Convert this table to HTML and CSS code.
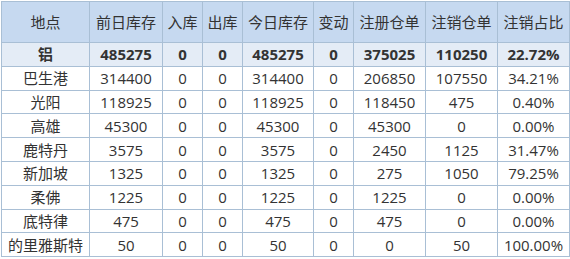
FILE: index.html
```html
<!DOCTYPE html>
<html lang="zh">
<head>
  <meta charset="UTF-8" />
  <title>库存</title>
  <link rel="stylesheet" href="styles.css">
</head>
<body>
  <table class="stock">
    <colgroup>
      <col style="width:88px"><col style="width:73px"><col style="width:40px"><col style="width:40px"><col style="width:71px"><col style="width:40px"><col style="width:72px"><col style="width:72px"><col style="width:72px">
    </colgroup>
    <thead>
      <tr><th>地点</th><th>前日库存</th><th>入库</th><th>出库</th><th>今日库存</th><th>变动</th><th>注册仓单</th><th>注销仓单</th><th>注销占比</th></tr>
    </thead>
    <tbody>
      <tr class="total"><td>铝</td><td>485275</td><td>0</td><td>0</td><td>485275</td><td>0</td><td>375025</td><td>110250</td><td>22.72%</td></tr>
      <tr><td>巴生港</td><td>314400</td><td>0</td><td>0</td><td>314400</td><td>0</td><td>206850</td><td>107550</td><td>34.21%</td></tr>
      <tr><td>光阳</td><td>118925</td><td>0</td><td>0</td><td>118925</td><td>0</td><td>118450</td><td>475</td><td>0.40%</td></tr>
      <tr><td>高雄</td><td>45300</td><td>0</td><td>0</td><td>45300</td><td>0</td><td>45300</td><td>0</td><td>0.00%</td></tr>
      <tr><td>鹿特丹</td><td>3575</td><td>0</td><td>0</td><td>3575</td><td>0</td><td>2450</td><td>1125</td><td>31.47%</td></tr>
      <tr><td>新加坡</td><td>1325</td><td>0</td><td>0</td><td>1325</td><td>0</td><td>275</td><td>1050</td><td>79.25%</td></tr>
      <tr><td>柔佛</td><td>1225</td><td>0</td><td>0</td><td>1225</td><td>0</td><td>1225</td><td>0</td><td>0.00%</td></tr>
      <tr><td>底特律</td><td>475</td><td>0</td><td>0</td><td>475</td><td>0</td><td>475</td><td>0</td><td>0.00%</td></tr>
      <tr><td>的里雅斯特</td><td>50</td><td>0</td><td>0</td><td>50</td><td>0</td><td>0</td><td>50</td><td>100.00%</td></tr>
    </tbody>
  </table>
</body>
</html>
```

FILE: styles.css
```css
* {
  margin: 0;
  padding: 0;
  box-sizing: border-box;
}
body {
  background: #ffffff;
  padding: 1px 0 0 1px;
  font-family: "Open Sans", "Noto Sans CJK SC", sans-serif;
  font-size: 15px;
  color: #333333;
}

/* Stock table */
table.stock {
  border-collapse: collapse;
  table-layout: fixed;
  width: 568px;
}
table.stock th,
table.stock td {
  border: 1px solid #a9bfd5;
  text-align: center;
  white-space: nowrap;
  padding: 0;
  line-height: 20px;
}
table.stock th {
  background: #c6d9f0;
  font-weight: normal;
  height: 41px;
}
table.stock td {
  height: 23.8px;
}
table.stock tr.total td {
  background: #e4ecf6;
  font-weight: bold;
}
```
